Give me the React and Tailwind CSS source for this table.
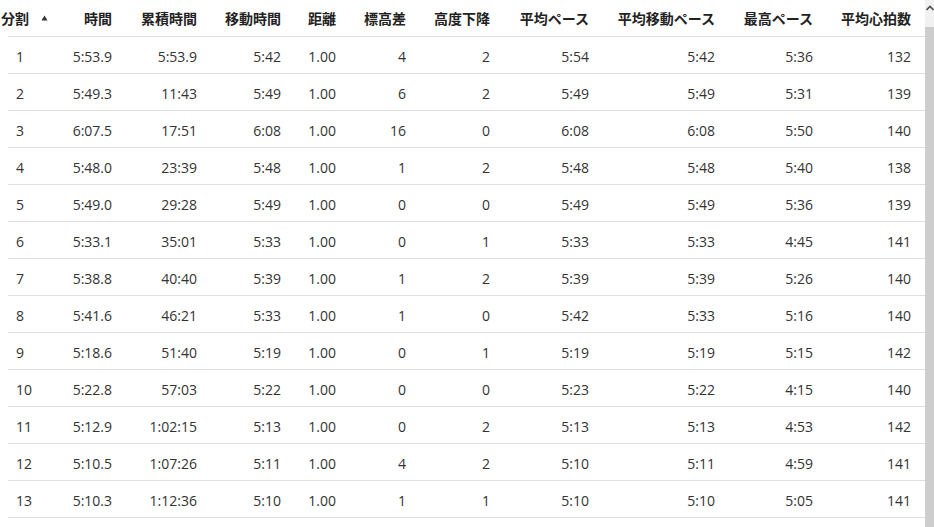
import React from "react";

const rows = [
  ["1", "5:53.9", "5:53.9", "5:42", "1.00", "4", "2", "5:54", "5:42", "5:36", "132"],
  ["2", "5:49.3", "11:43", "5:49", "1.00", "6", "2", "5:49", "5:49", "5:31", "139"],
  ["3", "6:07.5", "17:51", "6:08", "1.00", "16", "0", "6:08", "6:08", "5:50", "140"],
  ["4", "5:48.0", "23:39", "5:48", "1.00", "1", "2", "5:48", "5:48", "5:40", "138"],
  ["5", "5:49.0", "29:28", "5:49", "1.00", "0", "0", "5:49", "5:49", "5:36", "139"],
  ["6", "5:33.1", "35:01", "5:33", "1.00", "0", "1", "5:33", "5:33", "4:45", "141"],
  ["7", "5:38.8", "40:40", "5:39", "1.00", "1", "2", "5:39", "5:39", "5:26", "140"],
  ["8", "5:41.6", "46:21", "5:33", "1.00", "1", "0", "5:42", "5:33", "5:16", "140"],
  ["9", "5:18.6", "51:40", "5:19", "1.00", "0", "1", "5:19", "5:19", "5:15", "142"],
  ["10", "5:22.8", "57:03", "5:22", "1.00", "0", "0", "5:23", "5:22", "4:15", "140"],
  ["11", "5:12.9", "1:02:15", "5:13", "1.00", "0", "2", "5:13", "5:13", "4:53", "142"],
  ["12", "5:10.5", "1:07:26", "5:11", "1.00", "4", "2", "5:10", "5:11", "4:59", "141"],
  ["13", "5:10.3", "1:12:36", "5:10", "1.00", "1", "1", "5:10", "5:10", "5:05", "141"],
];

const headers = ["時間", "累積時間", "移動時間", "距離", "標高差", "高度下降", "平均ペース", "平均移動ペース", "最高ペース", "平均心拍数"];

const grid = "grid grid-cols-[51px_67px_85px_84px_55px_70px_84px_99px_126px_98px_98px]";

export default function App() {
  return (
    <div
      className="flex w-[934px] h-[527px] overflow-hidden bg-white"
      style={{ fontFamily: "'Open Sans', 'Noto Sans CJK JP', sans-serif" }}
    >
      <div className="flex-1 pl-[8px] overflow-hidden">
        <div className={`${grid} h-[37px] border-b border-[#dedede] items-center text-[14px] font-bold text-[#222]`}>
          <div className="flex items-center -ml-[7px] whitespace-nowrap">
            <span>分割</span>
            <svg width="7" height="6" viewBox="0 0 7 6" className="ml-[12px] -mt-[1px]">
              <path d="M3.5 0.5 L6.5 5.5 L0.5 5.5 Z" fill="#333" />
            </svg>
          </div>
          {headers.map((h) => (
            <div key={h} className="text-right pr-[14px] whitespace-nowrap">
              {h}
            </div>
          ))}
        </div>
        {rows.map((r) => (
          <div
            key={r[0]}
            className={`${grid} h-[37px] border-b border-[#dedede] items-center text-[14px] text-[#333] pt-[2px]`}
          >
            <div className="pl-[8px]">{r[0]}</div>
            {r.slice(1).map((c, i) => (
              <div key={i} className="text-right pr-[14px]">
                {c}
              </div>
            ))}
          </div>
        ))}
      </div>
      <div className="w-[9px] flex flex-col bg-[#f1f1f1]">
        <div className="h-[16px] flex items-center justify-center">
          <svg width="8" height="6" viewBox="0 0 8 6">
            <path d="M0.5 5 L4 1.5 L7.5 5" fill="none" stroke="#505050" strokeWidth="1.6" />
          </svg>
        </div>
        <div className="flex-1 bg-[#cdcdcd] mt-[11px]" />
      </div>
    </div>
  );
}
